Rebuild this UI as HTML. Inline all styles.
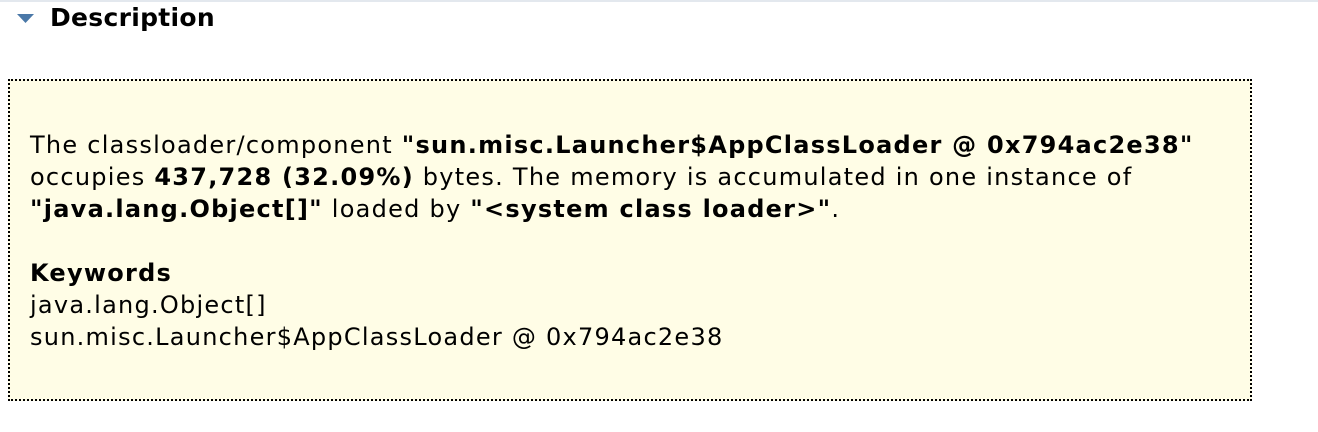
<!DOCTYPE html>
<html><head><style>
html,body{margin:0;padding:0;background:#fff;width:1318px;height:432px;overflow:hidden}
body{font-family:"DejaVu Sans",Verdana,sans-serif;color:#000;position:relative}
.top{position:absolute;left:0;top:0;width:1318px;height:2px;background:#e3e8ee}
.h{position:absolute;left:50px;top:2px;font-size:25px;font-weight:bold;line-height:32px;letter-spacing:0.3px}
.tri{position:absolute;left:17px;top:14px}
.box{position:absolute;left:8px;top:79px;width:1240px;height:318px;background:#fffde6;border:2px dotted #000}
.txt{position:absolute;left:20px;top:48px;font-size:24px;letter-spacing:1.25px;line-height:32px;white-space:nowrap}
</style></head><body>
<div class="top"></div>
<svg class="tri" width="17" height="9" viewBox="0 0 17 9"><path d="M0 0H17L8.5 9Z" fill="#4a78a8"/></svg>
<div class="h">Description</div>
<div class="box"><div class="txt">
The classloader/component <b>"sun.misc.Launcher$AppClassLoader @ 0x794ac2e38"</b><br>
occupies <b>437,728 (32.09%)</b> bytes. The memory is accumulated in one instance of<br>
<b>"java.lang.Object[]"</b> loaded by <b>"&lt;system class loader&gt;"</b>.<br><br>
<b>Keywords</b><br>
java.lang.Object[]<br>
sun.misc.Launcher$AppClassLoader @ 0x794ac2e38
</div></div>
</body></html>
